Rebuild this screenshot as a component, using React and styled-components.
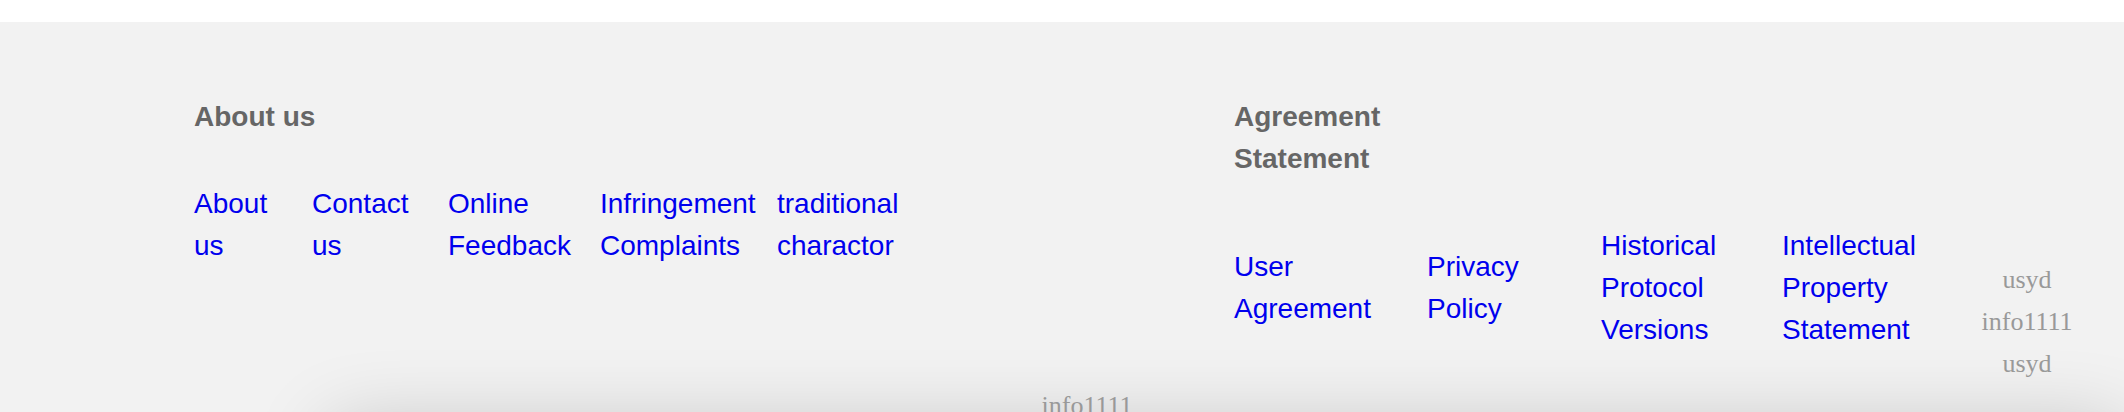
import * as React from 'react';
import styled, { createGlobalStyle } from 'styled-components';

const GlobalStyle = createGlobalStyle`
  html, body {
    margin: 0;
    padding: 0;
    background: #fff;
  }
  body {
    font-family: "Liberation Sans", Arial, Helvetica, sans-serif;
    overflow: hidden;
  }
`;

const FooterWrapper = styled.footer`
  margin-top: 22px;
  background: #f2f2f2;
  padding-top: 74px;
  font-size: 28px;
  line-height: 42px;
`;

const Columns = styled.div`
  display: flex;
  align-items: flex-start;
  padding-left: 194px;
`;

const Section = styled.section`
  display: flex;
  flex-direction: column;
  width: ${(p) => (p.$width ? `${p.$width}px` : 'auto')};
  flex-shrink: 0;
`;

const Heading = styled.h3`
  margin: 0 0 45px;
  width: ${(p) => (p.$width ? `${p.$width}px` : 'auto')};
  font-size: 28px;
  line-height: 42px;
  font-weight: 700;
  color: #666;
`;

const Row = styled.div`
  display: flex;
  align-items: flex-start;
`;

const LinkRow = styled.ul`
  display: flex;
  align-items: center;
  gap: 20px;
  margin: 0;
  padding: 0;
  list-style: none;
`;

const LinkItem = styled.li`
  width: ${(p) => p.$width}px;
  flex-shrink: 0;

  a {
    color: #0000ee;
    text-decoration: none;
  }
`;

const Credits = styled.div`
  width: 120px;
  margin: 34px 0 0 20px;
  text-align: center;
  font-family: "Liberation Serif", "Times New Roman", serif;
  font-size: 26px;
  line-height: 42px;
  color: #999;
`;

const Copyright = styled.div`
  padding-left: 50px;
  text-align: center;
  font-family: "Liberation Serif", "Times New Roman", serif;
  font-size: 26px;
  line-height: 42px;
  color: #999;
`;

const BottomCard = styled.div`
  margin-left: 330px;
  height: 200px;
  background: #f2f2f2;
  box-shadow: 0 0 80px rgba(0, 0, 0, 0.2);
`;

const aboutLinks = [
  { label: 'About us', width: 98 },
  { label: 'Contact us', width: 116 },
  { label: 'Online Feedback', width: 132 },
  { label: 'Infringement Complaints', width: 157 },
  { label: 'traditional charactor', width: 160 },
];

const agreementLinks = [
  { label: 'User Agreement', width: 173 },
  { label: 'Privacy Policy', width: 154 },
  { label: 'Historical Protocol Versions', width: 161 },
  { label: 'Intellectual Property Statement', width: 165 },
];

const Links = ({ items }) => (
  <LinkRow>
    {items.map((item) => (
      <LinkItem key={item.label} $width={item.width}>
        <a href="#">{item.label}</a>
      </LinkItem>
    ))}
  </LinkRow>
);

export default function App() {
  return (
    <>
      <GlobalStyle />
      <FooterWrapper>
        <Columns>
          <Section $width={1040}>
            <Heading>About us</Heading>
            <Links items={aboutLinks} />
          </Section>

          <Section>
            <Heading $width={200}>Agreement Statement</Heading>
            <Row>
              <Links items={agreementLinks} />
              <Credits>
                <div>usyd</div>
                <div>info1111</div>
                <div>usyd</div>
              </Credits>
            </Row>
          </Section>
        </Columns>

        <Copyright>info1111</Copyright>
        <BottomCard />
      </FooterWrapper>
    </>
  );
}
